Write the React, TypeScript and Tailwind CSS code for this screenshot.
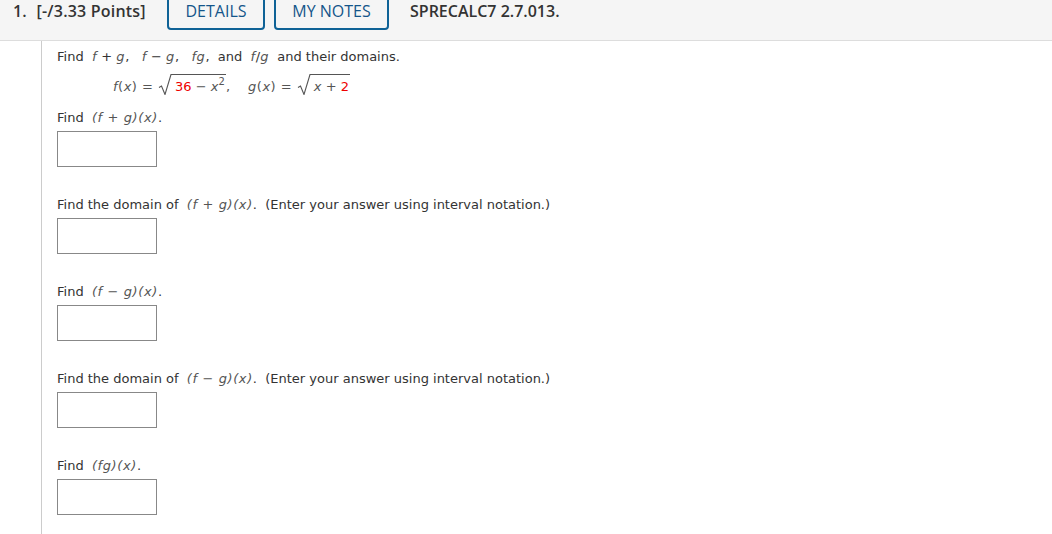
import React from "react";

const M = ({ children }: { children: React.ReactNode }) => (
  <span className="italic text-[#555] tracking-[0.6px]">{children}</span>
);

const Sqrt = ({ children }: { children: React.ReactNode }) => (
  <span className="inline-flex items-stretch">
    <svg width="14" height="21" viewBox="0 0 14 21" className="shrink-0">
      <path d="M1 13.5 L3.5 12 L7 20.5 L13 0.5 L14 0.5" fill="none" stroke="#555" strokeWidth="1.1" />
    </svg>
    <span className="border-t border-[#555] pt-[4px] pl-[3px] pr-[1px] leading-[16px]">{children}</span>
  </span>
);

const Box = () => <div className="mt-[5px] w-[100px] h-[36px] border border-[#888] bg-white" />;

const Label = ({ children, mt }: { children: React.ReactNode; mt: string }) => (
  <div className={`${mt} leading-[16px]`}>{children}</div>
);

export default function App() {
  return (
    <div className="w-[1052px] h-[534px] bg-white overflow-hidden text-[#333]" style={{ fontFamily: '"DejaVu Sans", Verdana, sans-serif' }}>
      <div className="h-[41px] bg-[#f5f5f5] border-b border-[#ddd] flex items-start" style={{ fontFamily: '"Open Sans", sans-serif' }}>
        <div className="pl-[13px] text-[16px] leading-[22px] font-semibold text-[#333] w-[167px] shrink-0 flex">
          <span>1.</span>
          <span className="ml-[10px] tracking-[0.2px]">[-/3.33 Points]</span>
        </div>
        <div className="-mt-[2px] h-[32px] w-[98px] border-2 border-[#0f6296] rounded-b-[4px] flex justify-center text-[16px] leading-[22px] text-[#14558a]">DETAILS</div>
        <div className="ml-[9px] -mt-[2px] h-[32px] w-[115px] border-2 border-[#0f6296] rounded-b-[4px] flex justify-center text-[16px] leading-[22px] text-[#14558a]">MY NOTES</div>
        <div className="ml-[21px] text-[16px] leading-[22px] font-semibold text-[#333]">SPRECALC7 2.7.013.</div>
      </div>
      <div className="ml-[41px] h-[493px] border-l border-[#ccc] pl-[15px] text-[13px]">
        <div className="pt-[8px] leading-[16px]">
          Find&nbsp; <M>f</M> + <M>g</M>,&nbsp;&nbsp; <M>f</M> − <M>g</M>,&nbsp;&nbsp; <M>fg</M>,&nbsp; and&nbsp; <M>f</M>/<M>g</M>&nbsp; and their domains.
        </div>
        <div className="mt-[9px] ml-[56px] flex items-end leading-[16px] text-[#555]">
          <span className="tracking-[0.5px]"><span className="italic">f</span>(<span className="italic">x</span>) =&nbsp;</span>
          <Sqrt>
            <span className="text-[#e00]">36</span> − <span className="italic">x</span>
            <span className="text-[10px] relative -top-[6px] leading-[10px]">2</span>
          </Sqrt>
          <span className="mr-[18px]">,</span>
          <span className="tracking-[0.5px]"><span className="italic">g</span>(<span className="italic">x</span>) =&nbsp;</span>
          <Sqrt>
            <span className="italic">x</span> + <span className="text-[#e00]">2</span>
          </Sqrt>
        </div>
        <Label mt="mt-[15px]">Find&nbsp; <M>(f + g)(x)</M>.</Label>
        <Box />
        <Label mt="mt-[30px]">Find the domain of&nbsp; <M>(f + g)(x)</M>.&nbsp; (Enter your answer using interval notation.)</Label>
        <Box />
        <Label mt="mt-[30px]">Find&nbsp; <M>(f − g)(x)</M>.</Label>
        <Box />
        <Label mt="mt-[30px]">Find the domain of&nbsp; <M>(f − g)(x)</M>.&nbsp; (Enter your answer using interval notation.)</Label>
        <Box />
        <Label mt="mt-[30px]">Find&nbsp; <M>(fg)(x)</M>.</Label>
        <Box />
      </div>
    </div>
  );
}
